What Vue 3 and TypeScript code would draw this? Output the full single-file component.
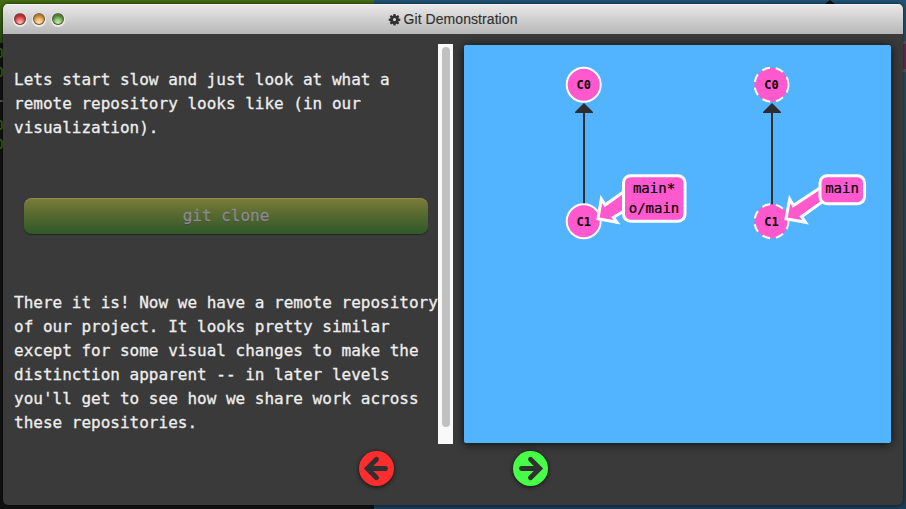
<script setup lang="ts">
interface CommitNode { id: string; x: number; y: number; remote: boolean }

const commits: CommitNode[] = [
  { id: 'C0', x: 119.7, y: 39.7, remote: false },
  { id: 'C1', x: 119.7, y: 176.3, remote: false },
  { id: 'C0', x: 307.5, y: 39.7, remote: true },
  { id: 'C1', x: 307.5, y: 176.3, remote: true },
]
const edges: number[] = [120, 308]
</script>

<template>
  <div class="desktop">
    <div class="backdrop">
      <div class="terminal">
        <div class="term-bar"></div>
        <div class="term-lines">
          <span class="prompt"></span><span class="prompt"></span><span class="prompt dim"></span><span class="prompt"></span><span class="prompt"></span>
        </div>
      </div>
      <div class="canvas"></div>
      <span class="back-arrow"></span>
      <span class="back-tag"></span>
    </div>

    <section class="window">
      <header class="titlebar">
        <div class="lights">
          <span class="light red"></span>
          <span class="light amber"></span>
          <span class="light green"></span>
        </div>
        <h1 class="title">
          <svg class="gear" viewBox="0 0 24 24">
            <path fill-rule="evenodd" d="M9.800 0h4.400l.6 3.300 1.800.8 2.800-1.900 3.100 3.100-1.900 2.800.7 1.700 3.400.6v4.400l-3.400.6-.7 1.800 1.900 2.700-3.100 3.100-2.800-1.900-1.800.8-.6 3.300H9.800l-.6-3.300-1.800-.8L4.600 23l-3.100-3.100 1.900-2.700-.7-1.800-3.400-.6v-4.400l3.400-.6.7-1.700-1.900-2.800 3.100-3.100 2.800 1.900 1.800-.8zM12 8.600a3.600 3.600 0 1 0 0 7.200 3.600 3.600 0 0 0 0-7.200z" />
          </svg>
          <span>Git Demonstration</span>
        </h1>
      </header>

      <main class="content">
        <article class="lesson">
          <div class="copy">
            <p>Lets start slow and just look at what a<br>remote repository looks like (in our<br>visualization).</p>
            <button class="command" type="button">git clone</button>
            <p>There it is! Now we have a remote repository<br>of our project. It looks pretty similar<br>except for some visual changes to make the<br>distinction apparent -- in later levels<br>you'll get to see how we share work across<br>these repositories.</p>
          </div>
          <div class="scrollbar"><span class="thumb"></span></div>
        </article>

        <div class="visual">
          <svg class="tree" width="427" height="398" viewBox="0 0 427 398">
            <g v-for="x in edges" :key="x">
              <path class="edge-line" :d="`M${x} 160V66`" />
              <path class="edge-head" :d="`M${x} 58l9 9v1h-18v-1z`" />
            </g>
            <g v-for="(c, i) in commits" :key="i">
              <circle class="commit" :class="{ remote: c.remote }" :cx="c.x" :cy="c.y" r="17" />
              <text class="commit-id" :x="c.x" :y="c.y + 4.2">{{ c.id }}</text>
            </g>
            <path class="pointer" d="M165 143L141 160L137.300 154L134 173.700L153 177.300L149.300 172.500L165 163Z" />
            <rect class="label" x="159.500" y="130.700" width="61.500" height="45.500" rx="7" />
            <text class="label-text" x="190" y="147.500">main*</text>
            <text class="label-text" x="190" y="168">o/main</text>
            <path class="pointer" d="M359 141L329.300 160.500L325.700 154L322 173.700L341.500 177.300L337.500 171.700L363 153.500Z" />
            <rect class="label" x="356" y="130.700" width="44.500" height="28" rx="7" />
            <text class="label-text" x="378" y="147.500">main</text>
          </svg>
        </div>
      </main>

      <footer class="controls">
        <button class="round prev" type="button" aria-label="Previous">
          <svg viewBox="0 0 36 36"><path d="M27.300 18H10M18 8.500L8.500 18L18 27.500" /></svg>
        </button>
        <button class="round next" type="button" aria-label="Next">
          <svg viewBox="0 0 36 36"><path d="M8.700 18H26M18 8.500L27.500 18L18 27.500" /></svg>
        </button>
      </footer>
    </section>
  </div>
</template>

<style>
body { margin: 0; overflow: hidden; }
</style>

<style scoped>
* { box-sizing: border-box; }
.desktop {
  position: relative;
  width: 906px;
  height: 509px;
  padding: 4px 3px 3px;
  overflow: hidden;
  font-family: "DejaVu Sans Mono", monospace;
}
.backdrop { position: absolute; inset: 0; display: flex; background: #1d405b; }
.terminal { width: 374px; background: #111; }
.term-bar { height: 43px; background: linear-gradient(#456e12, #294b12); }
.term-lines { display: flex; flex-direction: column; padding-top: 5px; gap: 9px; }
.prompt {
  width: 3px;
  height: 10px;
  border: 2px solid #345c10;
  border-left: 0;
  border-radius: 0 4px 4px 0;
}
.prompt.dim { width: 3px; height: 2px; margin: 14px 0 9px; border: 0; background: #555; }
.canvas { flex: 1; background: linear-gradient(#215476, #1b3c57); }
.back-arrow {
  position: absolute;
  left: 825px;
  top: 0;
  border: 5px solid transparent;
  border-top: 0;
  border-bottom: 4px solid #111;
}
.back-tag {
  position: absolute;
  right: -10px;
  top: 41px;
  width: 15px;
  height: 31px;
  border: 3px solid #505960;
  border-left-width: 1px;
  background: #70275a;
}
.window {
  position: relative;
  display: flex;
  flex-direction: column;
  width: 899.500px;
  height: 501px;
  padding-left: .5px;
  border-radius: 5px;
  background: #3a3a3a;
  box-shadow: 0 0 4px rgba(0, 0, 0, .65);
  overflow: hidden;
}
.titlebar {
  display: flex;
  align-items: center;
  flex: 0 0 30px;
  margin-left: -.5px;
  background: linear-gradient(#ebe9ea, #b7b7b7);
  box-shadow: inset 0 1px #f2f0f1;
}
.lights { display: flex; gap: 7px; margin-left: 11px; }
.light {
  width: 12px;
  height: 12px;
  border: 1px solid rgba(65, 45, 40, .65);
  border-radius: 50%;
  box-shadow: 0 1px 1px 1px rgba(255, 255, 255, .75), inset 0 2px 3px rgba(55, 25, 10, .4);
}
.red { background: radial-gradient(circle at 50% 90%, #ffc0bc, #e33c42 65%); }
.amber { background: radial-gradient(circle at 50% 90%, #ffe9a8, #e9a64e 65%); }
.green { background: radial-gradient(circle at 50% 90%, #c9f2aa, #61a94e 65%); }
.title {
  display: flex;
  align-items: center;
  gap: 4px;
  margin: 0 0 0 324.500px;
  color: #303030;
  font: 400 14px/20px "Liberation Sans", Arial, sans-serif;
  letter-spacing: .07px;
  white-space: nowrap;
  -webkit-text-stroke: .15px #303030;
}
.gear { width: 11px; height: 11px; fill: #303030; overflow: visible; }
.content { display: flex; flex: 0 0 410px; padding-top: 10px; }
.lesson { display: flex; width: 449.500px; height: 400px; }
.copy { width: 434.500px; padding: 24px 0 0 10.500px; }
.copy p {
  margin: 0;
  color: #eee;
  font-size: 16px;
  line-height: 24px;
  white-space: nowrap;
  -webkit-text-stroke: .3px #eee;
}
.command {
  display: block;
  width: 404px;
  height: 36px;
  margin: 58px 0 57px 10px;
  padding: 0;
  border: 0;
  border-radius: 8px;
  background: linear-gradient(#7c7d39, #54682f 50%, #2e5928);
  box-shadow: 0 1px 1px #202820, inset 0 1px rgba(160, 160, 105, .45);
  color: #8b8b8b;
  font: 16px/36px "DejaVu Sans Mono", monospace;
  text-shadow: 0 1px #414141;
  -webkit-text-stroke: .3px #8b8b8b;
}
.scrollbar { width: 15px; padding: 3px 3px 17px 4px; background: #f9f9f9; }
.thumb { display: block; width: 8px; height: 380px; border-radius: 4px; background: #c1c1c1; }
.visual {
  width: 427px;
  height: 398px;
  margin: 1px 0 0 11px;
  border-radius: 2px;
  background: #52b3ff;
  box-shadow: 0 1px 10px rgba(0, 0, 0, .8);
}
.tree { display: block; }
.edge-line { fill: none; stroke: #2d2d2d; stroke-width: 2; }
.edge-head { fill: #2d2d2d; }
.commit { fill: #ff59cd; stroke: #fff; stroke-width: 2; }
.commit.remote { stroke-dasharray: 8 6; }
.commit-id { fill: #000; font-size: 12px; font-weight: 700; text-anchor: middle; }
.pointer { fill: #ff59cd; stroke: #fff; stroke-width: 3; stroke-miterlimit: 8; }
.label { fill: #ff59cd; stroke: #fff; stroke-width: 3; }
.label-text { fill: #000; stroke: #000; stroke-width: .2px; font-size: 14px; text-anchor: middle; }
.controls { display: flex; gap: 119px; padding: 6.500px 0 0 355.500px; }
.round {
  width: 35px;
  height: 35px;
  padding: 0;
  border: 0;
  border-radius: 50%;
  box-shadow: 0 1px 4px #111;
}
.round svg { display: block; width: 35px; height: 35px; }
.round path { fill: none; stroke: #303030; stroke-width: 5; stroke-linecap: round; }
.prev { background: #ff2d2d; }
.next { background: #47ff47; }
</style>
